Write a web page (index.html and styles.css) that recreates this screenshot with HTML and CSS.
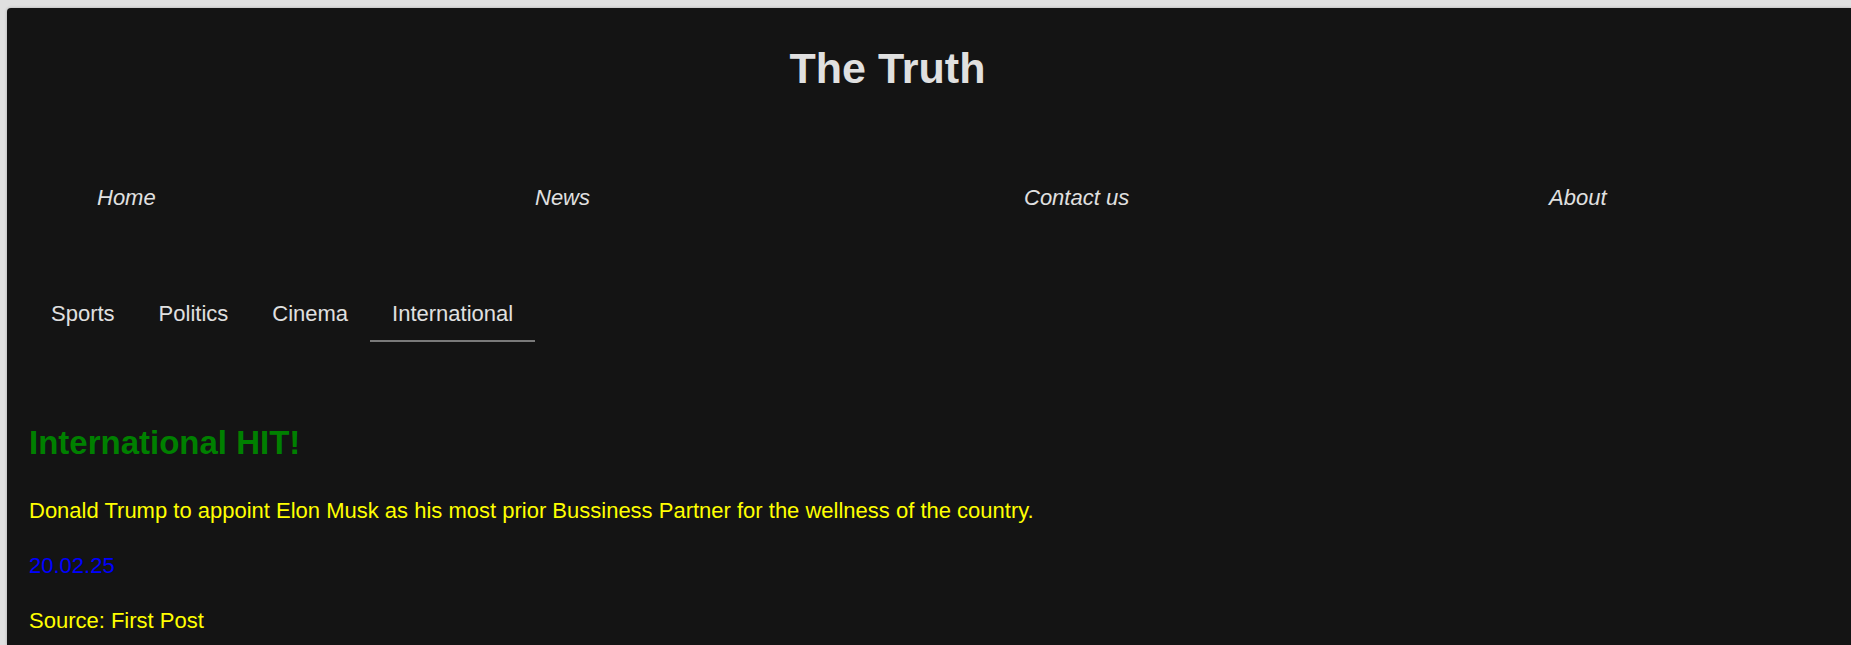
FILE: index.html
```html
<!DOCTYPE html>
<html lang="en">
<head>
<meta charset="utf-8">
<title>The Truth</title>
<link rel="stylesheet" href="styles.css">
</head>
<body>
<div class="page">
  <header class="masthead">
    <h1 class="title">The Truth</h1>
  </header>
  <nav class="mainnav">
    <a class="mainnav-link" href="#">Home</a>
    <a class="mainnav-link" href="#">News</a>
    <a class="mainnav-link" href="#">Contact us</a>
    <a class="mainnav-link" href="#">About</a>
  </nav>
  <ul class="tabs">
    <li class="tab">Sports</li>
    <li class="tab">Politics</li>
    <li class="tab">Cinema</li>
    <li class="tab tab-active">International</li>
  </ul>
  <article class="story">
    <h2 class="story-title">International HIT!</h2>
    <p class="story-text">Donald Trump to appoint Elon Musk as his most prior Bussiness Partner for the wellness of the country.</p>
    <p class="story-date">20.02.25</p>
    <p class="story-text">Source: First Post</p>
  </article>
</div>
</body>
</html>
```

FILE: styles.css
```css
html, body {
  margin: 0;
  padding: 0;
}

body {
  background: #e0e0e0;
  padding: 8px 0 0 7px;
  font-family: "Liberation Sans", Arial, sans-serif;
  font-size: 22px;
  line-height: 1.5;
  overflow: hidden;
}

.page {
  background: #141414;
  border-radius: 4px 0 0 0;
  box-shadow: 0 0 3px rgba(0, 0, 0, 0.25);
  min-height: calc(100vh - 8px);
  color: #e0e0e0;
}

.masthead {
  padding-right: 83px;
  text-align: center;
}

.title {
  margin: 0;
  padding-top: 28px;
  font-size: 43px;
  font-weight: bold;
  line-height: 64.5px;
  color: #e0e0e0;
}

.mainnav {
  display: grid;
  grid-template-columns: 438px 489px 525px auto;
  margin-top: 80px;
  padding-left: 90px;
  line-height: 33px;
}

.mainnav-link {
  color: #e0e0e0;
  font-style: italic;
  text-decoration: none;
  justify-self: start;
}

.tabs {
  display: flex;
  list-style: none;
  margin: 73px 0 0;
  padding: 0 0 0 22px;
}

.tab {
  padding: 10px 22px;
  line-height: 33px;
  border-bottom: 2px solid transparent;
  color: #e0e0e0;
}

.tab-active {
  border-bottom-color: #7a7a7a;
}

.story {
  padding: 0 22px 0 22px;
}

.story-title {
  margin: 76px 0 27px;
  font-size: 33px;
  font-weight: bold;
  line-height: 49.5px;
  color: #008000;
}

.story-text {
  margin: 22px 0;
  color: #ffff00;
}

.story-date {
  margin: 22px 0;
  color: #0000ff;
}
```
